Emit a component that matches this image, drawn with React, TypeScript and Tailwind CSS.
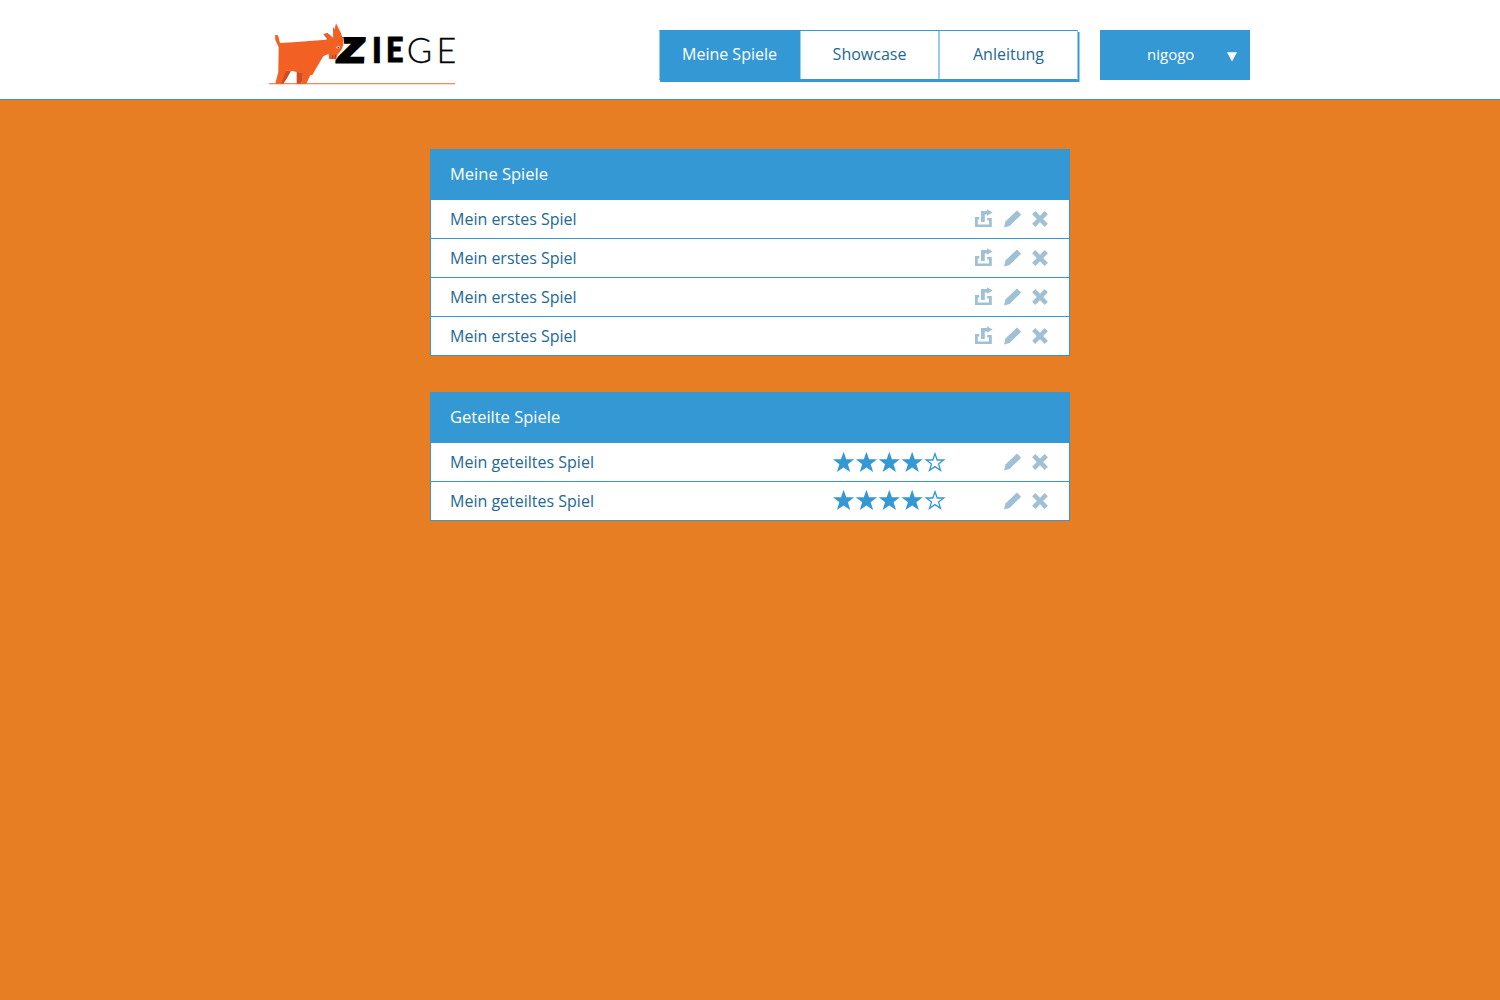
import React from "react";

function Logo() {
  return (
    <svg width="200" height="75" viewBox="0 0 200 75" role="img" aria-label="Ziege">
      <g fill="#000" fontFamily="Lato, sans-serif" fontSize="36">
        <text
          transform="translate(76.6 46.6) skewX(-3) scale(1.38 1)"
          fontSize="32.4"
          fontWeight="900"
          stroke="#000"
          strokeWidth="2.8"
        >
          Z
        </text>
        <text x="111.6" y="47.6" fontSize="35.5" fontWeight="900" stroke="#000" strokeWidth="0.5">I</text>
        <text transform="translate(126 47.4) scale(0.88 1)" fontSize="34.5" fontWeight="900" stroke="#000" strokeWidth="1">E</text>
        <text transform="translate(146.8 48) scale(0.96 1)" fontWeight="300" stroke="#000" strokeWidth="0.25">G</text>
        <text transform="translate(176.4 48) scale(0.95 1)" fontWeight="300" stroke="#000" strokeWidth="0.25">E</text>
      </g>
      <rect x="9" y="68" width="186" height="1.3" fill="#f58a5b" />
      <g transform="scale(0.33333)">
        <path d="M196 110 L207 132 L229 133 L253 92 L250 66 Z" fill="#fff" />
        <path d="M73 168 L94 166 L81 190 L70 206 L62 206 Z M110 170 L129 173 L128 190 L124 206 L110 206 Z M190 57 L203 54 L217 72 L205 76 Z M219 36 L228 50 L224 70 L220 62 Z" fill="#cf4c26" />
        <path d="M45 60 L54 61 L60 84 L100 82 L198 74 L205 70 L192 58 L206 56 L219 68 L222 50 L228 25 L243 55 L250 74 L250 88 L246 102 L232 120 L229 132 L207 132 L206 116 L190 124 L176 147 L157 180 L151 180 L139 206 L124 206 L129 175 L92 167 L78 167 L63 206 L46 206 L55 170 L56 97 L46 75 Z" fill="#f26024" />
        <path d="M227 98 L236 92 L240 97 L236 102 Z" fill="#fff" />
        <circle cx="235" cy="98" r="2.4" fill="#4a1c0c" />
        <path d="M218 121 V131 M227 120 L225 131" stroke="#8d351c" strokeWidth="2.5" fill="none" />
      </g>
    </svg>
  );
}

function ShareIcon() {
  return (
    <svg width="18" height="18" viewBox="0 0 18 18" className="fill-[#a0c0d6]">
      <path d="M6 2h6V0.3l5.6 3.2L12 6.7V5.4H9.8v5.4V13H6zM0 8h4.3v2.4H2.8v5.2h11.2V11.4H12.2V9h4.6v9H0z" />
    </svg>
  );
}

function PencilIcon() {
  return (
    <svg width="18" height="18" viewBox="0 0 18 18" className="fill-[#a0c0d6]">
      <path d="M12.9 1.4 L14 0.6 L18 4.6 L17.2 5.7 L6.6 15.9 L1 17.6 L2.4 11.4 Z" />
    </svg>
  );
}

function CrossIcon() {
  return (
    <svg width="16" height="16" viewBox="0 0 16 16" className="fill-none stroke-[#a0c0d6]">
      <path d="M1.7 1.7 L14.3 14.3 M14.3 1.7 L1.7 14.3" strokeWidth="4.5" />
    </svg>
  );
}

function Stars({ value }: { value: number }) {
  return (
    <svg width="114" height="22" viewBox="0 0 114 22" className="stroke-[#3498d5]">
      {[0, 1, 2, 3, 4].map((i) => (
        <path
          key={i}
          transform={`translate(${11.6 + i * 22.85} 11.4)`}
          d="M0-8.7L2.2-2.4H8.7L3.5 1.6L5.5 8L0 4.2L-5.5 8L-3.5 1.6L-8.7-2.4H-2.2Z"
          strokeWidth="1.3"
          className={i < value ? "fill-[#3498d5]" : "fill-white"}
        />
      ))}
    </svg>
  );
}

function Panel({ title, game, count, shared }: { title: string; game: string; count: number; shared?: boolean }) {
  return (
    <section className="w-[640px] border border-[#3498d5] bg-white">
      <h2 className="flex h-[50px] items-center bg-[#3498d5] pb-0.5 pl-[19px] text-[16.5px] text-white">{title}</h2>
      <ul className="divide-y divide-[#3498d5]">
        {Array.from({ length: count }, (_, i) => (
          <li key={i} className="flex h-[39px] items-center pr-[21px] pl-[19px] last:h-[38px]">
            <span className="flex-1">{game}</span>
            {shared ? (
              <span className={i === 0 ? "mr-[57px]" : "mr-[57px] pb-0.5"}>
                <Stars value={4} />
              </span>
            ) : (
              <span className="mr-[10px] pb-0.5">
                <ShareIcon />
              </span>
            )}
            <span className="mr-[11px]">
              <PencilIcon />
            </span>
            <CrossIcon />
          </li>
        ))}
      </ul>
    </section>
  );
}

export default function App() {
  return (
    <div className="min-h-screen bg-[#e77e23] font-['Open_Sans',sans-serif] text-base text-[#236896]">
      <header className="h-[100px] border-b border-[#3498d5] bg-white">
        <div className="mx-auto flex w-[1000px] items-start pl-[10px]">
          <div className="mt-[15px]">
            <Logo />
          </div>
          <nav className="mt-[30px] ml-[199px] flex h-[50px] w-[419px] border border-[#3498d5] border-r-[#9acbea] border-l-[#9acbea] bg-white shadow-[1px_2px_0_#3498d5,2px_2px_0_#9acbea]">
            <a className="flex w-[140px] items-center justify-center bg-[#3498d5] pr-px pb-0.5 text-white">Meine Spiele</a>
            <span className="w-px bg-[#9acbea]" />
            <a className="flex flex-1 items-center justify-center pb-0.5">Showcase</a>
            <span className="w-0.5 bg-[#9acbea]" />
            <a className="flex flex-1 items-center justify-center pb-0.5">Anleitung</a>
          </nav>
          <button className="mt-[30px] ml-auto flex h-[50px] w-[150px] items-center bg-[#3498d5] text-[15px] text-white">
            <span className="ml-[47px] flex-1 pb-0.5 text-left">nigogo</span>
            <svg width="10" height="10" viewBox="0 0 10 10" className="mt-1 mr-[13px] fill-white">
              <path d="M0 0.3H10L5 9.5Z" />
            </svg>
          </button>
        </div>
      </header>
      <main className="mx-auto mt-[49px] flex w-[640px] flex-col gap-9">
        <Panel title="Meine Spiele" game="Mein erstes Spiel" count={4} />
        <Panel title="Geteilte Spiele" game="Mein geteiltes Spiel" count={2} shared />
      </main>
    </div>
  );
}
